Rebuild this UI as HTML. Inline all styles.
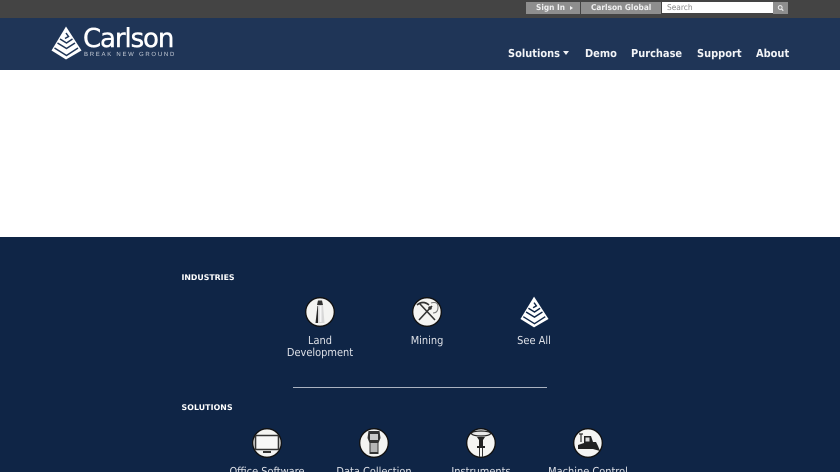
<!DOCTYPE html>
<html><head><meta charset="utf-8"><style>
html,body{margin:0;padding:0;width:840px;height:472px;overflow:hidden}
body{background:#fff;font-family:"DejaVu Sans",sans-serif}
#w{position:relative;width:840px;height:472px;overflow:hidden;background:#fff;text-rendering:geometricPrecision}
.a{position:absolute;white-space:nowrap}
.n{top:46.5px;font-size:11px;line-height:13px;font-weight:bold;color:#f2f4f7;transform:scaleX(.895);transform-origin:0 0;filter:blur(.25px)}
.b{top:2px;height:12px;background:#8e8e8e}
.bt{top:2px;color:#f0f0f0;font-size:8px;font-weight:bold;line-height:11px;transform:scaleX(.923);transform-origin:0 0;filter:blur(.2px)}
.h{font-family:"DejaVu Sans",sans-serif;font-weight:bold;font-size:7.8px;color:#fff;line-height:10px;filter:blur(.2px)}
.t{font-size:11px;line-height:12px;color:#dde0e7;text-align:center;width:110px;transform:scaleX(.893);filter:blur(.25px)}
svg{position:absolute;overflow:visible;filter:blur(.3px)}
</style></head><body><div id="w">
<div class="a" style="left:0;top:0;width:840px;height:18px;background:#444"></div>
<div class="a" style="left:0;top:18px;width:840px;height:52px;background:#1f3557"></div>
<div class="a" style="left:0;top:237px;width:840px;height:235px;background:#0f2546"></div>

<div class="a b" style="left:526px;width:54px"></div>
<div class="a bt" style="left:536px">Sign In</div>
<div class="a" style="left:570px;top:5.5px;width:0;height:0;border-top:2.5px solid transparent;border-bottom:2.5px solid transparent;border-left:3px solid #f0f0f0"></div>
<div class="a b" style="left:581px;width:80px"></div>
<div class="a bt" style="left:591px">Carlson Global</div>
<div class="a" style="left:662px;top:2px;width:111px;height:11px;background:#fff"></div>
<div class="a" style="left:667px;top:2px;color:#888;font-size:8px;line-height:11px;transform:scaleX(.93);transform-origin:0 0">Search</div>
<div class="a" style="left:773px;top:2px;width:15px;height:12px;background:#8e8e8e"></div>
<svg style="left:773px;top:2px" width="15" height="12" viewBox="0 0 15 12"><circle cx="7.2" cy="5.5" r="1.9" fill="none" stroke="#eee" stroke-width="1"/><path d="M8.6 7l1.7 1.7" stroke="#eee" stroke-width="1.2"/></svg>

<svg style="left:51px;top:26px" width="31" height="34" viewBox="0 0 31 34">
<path d="M15 0.5L30.5 24.5L15 33.5L0.5 24.5Z" fill="#fff"/>
<path d="M15 7l2.5 3.5L14 12.5M9 13l6.5 4 6-4M6.5 17l9 5.5 8.5-5.5M3.5 22l12 7.5 11.5-7.5" fill="none" stroke="#1f3557" stroke-width="1.5"/>
</svg>
<div class="a" style="left:83px;top:22px;font-family:'DejaVu Sans',sans-serif;font-size:26px;line-height:34px;color:#fff;letter-spacing:-1.1px;-webkit-text-stroke:.4px #fff">Carlson</div>
<div class="a" style="left:84px;top:52px;font-family:'Liberation Sans',sans-serif;font-size:6px;line-height:7px;color:#c4cbd6;letter-spacing:1.73px">BREAK NEW GROUND</div>

<div class="a n" style="left:508px">Solutions</div>
<div class="a" style="left:563px;top:51px;width:0;height:0;border-left:3.5px solid transparent;border-right:3.5px solid transparent;border-top:4px solid #eef0f4"></div>
<div class="a n" style="left:584.5px">Demo</div>
<div class="a n" style="left:631px">Purchase</div>
<div class="a n" style="left:697px">Support</div>
<div class="a n" style="left:756px">About</div>

<div class="a h" style="left:181.5px;top:272.5px">INDUSTRIES</div>
<div class="a h" style="left:181.5px;top:403px;letter-spacing:.1px">SOLUTIONS</div>
<div class="a" style="left:293px;top:387px;width:254px;height:1px;background:#aab2c0"></div>

<svg style="left:305px;top:297px" width="30" height="30" viewBox="0 0 30 30"><circle cx="15" cy="15" r="14.3" fill="#f4f4f2" stroke="#111" stroke-width="1.3"/><path d="M13 3.5h4l1 4.5h-6Z" fill="#333"/><path d="M12.5 8h5.5l1.5 18h-9Z" fill="#d8d8d8"/><path d="M12.5 9l-2 17H13V9Z" fill="#2a2a2a"/><path d="M14.5 9h2v16h-2Z" fill="#f6f6f6"/></svg>

<svg style="left:412px;top:297px" width="30" height="30" viewBox="0 0 30 30"><circle cx="15" cy="15" r="14.3" fill="#f4f4f2" stroke="#111" stroke-width="1.3"/><path d="M5 8Q11 3 17 8M8 7l15 16" fill="none" stroke="#333" stroke-width="1.6"/><path d="M7 23L20 9" stroke="#333" stroke-width="1.6"/><circle cx="18" cy="11" r="1.8" fill="#333"/><path d="M19 6q7-2 7 4t-5 6" fill="none" stroke="#777" stroke-width="1"/></svg>

<svg style="left:520px;top:296px" width="29" height="32" viewBox="0 0 31 34"><path d="M15 0.5L30.5 24.5L15 33.5L0.5 24.5Z" fill="#fff"/><path d="M15 7l2.5 3.5L14 12.5M9 13l6.5 4 6-4M6.5 17l9 5.5 8.5-5.5M3.5 22l12 7.5 11.5-7.5" fill="none" stroke="#0f2546" stroke-width="1.5"/></svg>

<div class="a t" style="left:265px;top:334.5px">Land<br>Development</div>
<div class="a t" style="left:372px;top:334.5px">Mining</div>
<div class="a t" style="left:479px;top:334.5px">See All</div>

<svg style="left:252px;top:428px" width="30" height="30" viewBox="0 0 30 30"><circle cx="15" cy="15" r="14.3" fill="#f4f4f2" stroke="#111" stroke-width="1.3"/><rect x="3.5" y="7.5" width="23" height="14" rx="1" fill="#f7f7f7" stroke="#333" stroke-width="1.6"/><path d="M11 24h8" stroke="#333" stroke-width="2"/></svg>

<svg style="left:359px;top:428px" width="30" height="30" viewBox="0 0 30 30"><circle cx="15" cy="15" r="14.3" fill="#f4f4f2" stroke="#111" stroke-width="1.3"/><path d="M9.5 3h11l1 7-2 5v11h-9V15l-2-5Z" fill="#333"/><rect x="11" y="6" width="8" height="6" fill="#c8c8c8"/><rect x="11.5" y="15" width="7" height="9" fill="#b5b5b5"/></svg>

<svg style="left:466px;top:428px" width="30" height="30" viewBox="0 0 30 30"><circle cx="15" cy="15" r="14.3" fill="#f4f4f2" stroke="#111" stroke-width="1.3"/><ellipse cx="15" cy="5.5" rx="9.5" ry="2.5" fill="#e8e8e8" stroke="#222" stroke-width="1.2"/><path d="M11 9h8l-2 3v6h2v2h-8v-2h2v-6Z" fill="#222"/><path d="M13.5 20v9M16.5 20v9" stroke="#333" stroke-width="1"/></svg>

<svg style="left:573px;top:428px" width="30" height="30" viewBox="0 0 30 30"><circle cx="15" cy="15" r="14.3" fill="#f4f4f2" stroke="#111" stroke-width="1.3"/><path d="M6 6h4M8 6v8" stroke="#333" stroke-width="1.2"/><path d="M11 8h7l2 6h3l2 4 2 5-7-2H5v-4l6-2Z" fill="#222"/><rect x="12.5" y="9.5" width="4" height="4" fill="#ddd"/></svg>

<div class="a t" style="left:212px;top:465.5px">Office Software</div>
<div class="a t" style="left:319px;top:465.5px">Data Collection</div>
<div class="a t" style="left:426px;top:465.5px">Instruments</div>
<div class="a t" style="left:533px;top:465.5px">Machine Control</div>
</div></body></html>
